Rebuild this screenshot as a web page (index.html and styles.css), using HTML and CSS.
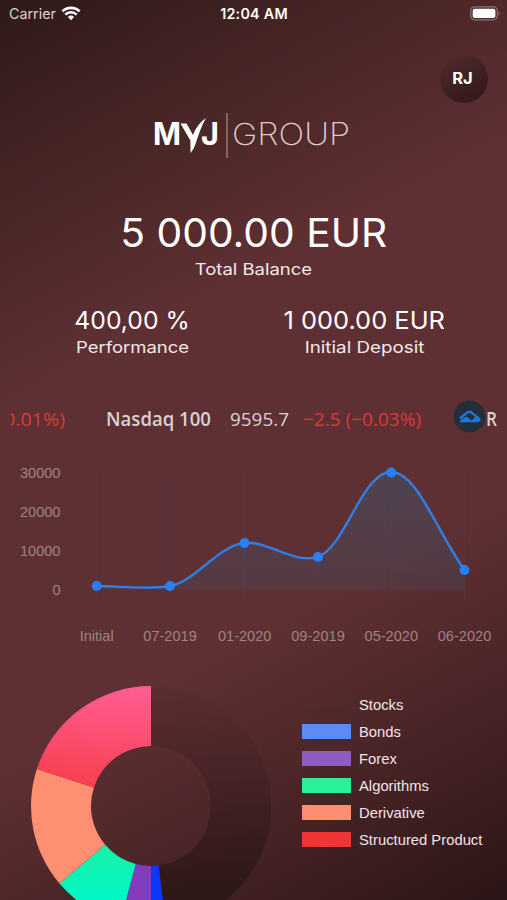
FILE: index.html
```html
<!DOCTYPE html>
<html lang="en">
<head>
    <meta charset="UTF-8">
    <meta name="viewport" content="width=device-width, initial-scale=1.0">
    <title>MYJ Group</title>
    <link rel="stylesheet" href="styles.css">
</head>

<body>
    <div class="status-bar">
        <div class="carrier">
            <span>Carrier</span>
            <svg width="20" height="16" viewBox="0 0 20 16">
                <path d="M1.4 5.4 A12.2 12.2 0 0 1 18.6 5.4" fill="none" stroke="#fff" stroke-width="2.6"/>
                <path d="M4.3 8.6 A8 8 0 0 1 15.7 8.6" fill="none" stroke="#fff" stroke-width="2.4"/>
                <path d="M6.9 10.9 A4.4 4.4 0 0 1 13.1 10.9 L10 14.2 Z" fill="#fff"/>
            </svg>
        </div>
        <div class="time">12:04 AM</div>
        <svg class="battery" width="32" height="16" viewBox="0 0 32 16">
            <rect x="0.8" y="0.8" width="26.5" height="13" rx="4" fill="none" stroke="#8f7072" stroke-width="1.2"/>
            <rect x="2.7" y="2.7" width="22.7" height="9.2" rx="2" fill="#fff"/>
            <path d="M28.6 5 Q31 7.3 28.6 9.7 Z" fill="#8f7072"/>
        </svg>
    </div>

    <div class="top">
        <div class="avatar">RJ</div>
    </div>

    <div class="logo">
        <svg width="200" height="50" viewBox="0 0 200 50">
            <text class="logo-bold" x="-1" y="34" textLength="28" lengthAdjust="spacingAndGlyphs">M</text>
            <path d="M26.5 12.5 L32.5 12.5 L39 24 Q43 13 52 7 Q48.5 13 46 20 Q43 28 41.5 33 Q40 38 36.5 42 L36.4 29.5 Z" fill="#fff"/>
            <text class="logo-bold" x="47" y="34" textLength="18" lengthAdjust="spacingAndGlyphs">J</text>
            <line x1="73" y1="2" x2="73" y2="47" stroke="#a88c8c" stroke-width="1.2"/>
            <text class="logo-thin" x="78" y="34" textLength="118" lengthAdjust="spacingAndGlyphs">GROUP</text>
        </svg>
    </div>

    <div class="balance">
        <div class="amount"><span>5 000.00 EUR</span></div>
        <div class="label"><span class="l1">Total Balance</span></div>
    </div>

    <div class="stats">
        <div class="stat">
            <div class="value"><span class="v1">400,00 %</span></div>
            <div class="label"><span class="l2">Performance</span></div>
        </div>
        <div class="stat stat-right">
            <div class="value"><span class="v2">1 000.00 EUR</span></div>
            <div class="label"><span class="l3">Initial Deposit</span></div>
        </div>
    </div>

    <div class="ticker">
        <svg width="486" height="36" viewBox="0 0 486 36">
            <text class="down" x="-7" y="26" textLength="61" lengthAdjust="spacingAndGlyphs">0.01%)</text>
            <line x1="75" y1="8" x2="75" y2="30" stroke="#553035"/>
            <text class="name" x="95" y="26" textLength="105" lengthAdjust="spacingAndGlyphs">Nasdaq 100</text>
            <text class="price" x="219" y="26" textLength="59" lengthAdjust="spacingAndGlyphs">9595.7</text>
            <text class="down" x="292" y="26" textLength="118" lengthAdjust="spacingAndGlyphs">−2.5 (−0.03%)</text>
            <circle cx="458.5" cy="16.5" r="16" fill="#252d3a"/>
            <path d="M449 18.5 L456 12.6 Q458 11 460.5 12.6 L469 19.5" fill="none" stroke="#1b78d6" stroke-width="2.4"/>
            <path d="M449.5 22.2 Q448 21 450 19.8 L455.5 16.5 L460.5 20.4 L465.5 16 Q470 18 469.5 20.5 Q468.5 22.2 466 22.2 Z" fill="#1b78d6"/>
            <text class="name" x="475" y="26" textLength="11" lengthAdjust="spacingAndGlyphs">R</text>
        </svg>
    </div>

    <svg class="line-chart" width="507" height="210" viewBox="0 450 507 210">
        <defs>
            <linearGradient id="area" x1="0" y1="472" x2="0" y2="590" gradientUnits="userSpaceOnUse">
                <stop offset="0" stop-color="#2a6b90" stop-opacity="0.32"/>
                <stop offset="1" stop-color="#2a6b90" stop-opacity="0.15"/>
            </linearGradient>
        </defs>
        <g stroke="#4a4468" stroke-opacity="0.25" stroke-width="1.5">
            <line x1="97" y1="472" x2="97" y2="602"/>
            <line x1="170" y1="472" x2="170" y2="602"/>
            <line x1="244.5" y1="472" x2="244.5" y2="602"/>
            <line x1="318" y1="472" x2="318" y2="602"/>
            <line x1="391" y1="472" x2="391" y2="602"/>
            <line x1="464.5" y1="472" x2="464.5" y2="602"/>
        </g>
        <path fill="url(#area)" d="M97 586 C121 586 146 590 170 586 C196 581 219 545 244.5 543 C268 540.5 293 564 318 557 C346 546 362 472 391 472 C417 472 436 530 464.5 570 L464.5 589.5 L97 589.5 Z"/>
        <path fill="none" stroke="#2f7fe6" stroke-width="2.4" d="M97 586 C121 586 146 590 170 586 C196 581 219 545 244.5 543 C268 540.5 293 564 318 557 C346 546 362 472 391 472 C417 472 436 530 464.5 570"/>
        <g fill="#2781fb">
            <circle cx="96.7" cy="586" r="4.9"/>
            <circle cx="170" cy="586" r="4.9"/>
            <circle cx="244.5" cy="543" r="4.9"/>
            <circle cx="318" cy="557" r="4.9"/>
            <circle cx="391.2" cy="472.5" r="4.9"/>
            <circle cx="464.5" cy="570" r="4.9"/>
        </g>
        <g class="axis" text-anchor="end">
            <text x="60.5" y="477.5">30000</text>
            <text x="60.5" y="516.5">20000</text>
            <text x="60.5" y="555.5">10000</text>
            <text x="60.5" y="594.5">0</text>
        </g>
        <g class="axis" text-anchor="middle">
            <text x="96.7" y="641">Initial</text>
            <text x="170" y="641">07-2019</text>
            <text x="244.7" y="641">01-2020</text>
            <text x="318" y="641">09-2019</text>
            <text x="391.3" y="641">05-2020</text>
            <text x="464.5" y="641">06-2020</text>
        </g>
    </svg>

    <div class="portfolio">
        <!-- donut, centre 120 120 -->
        <svg class="donut" width="240" height="240" viewBox="0 0 240 240">
            <defs>
                <linearGradient id="stocks" x1="120" y1="0" x2="145" y2="240" gradientUnits="userSpaceOnUse">
                    <stop offset="0" stop-color="#5c2e31"/>
                    <stop offset="0.85" stop-color="#2f1818"/>
                    <stop offset="1" stop-color="#2b1515"/>
                </linearGradient>
                <linearGradient id="product" x1="75" y1="0" x2="65" y2="100" gradientUnits="userSpaceOnUse">
                    <stop offset="0" stop-color="#ff5c92"/>
                    <stop offset="1" stop-color="#f8404f"/>
                </linearGradient>
                <linearGradient id="algo" x1="0" y1="155" x2="0" y2="215" gradientUnits="userSpaceOnUse">
                    <stop offset="0" stop-color="#1bf0a6"/>
                    <stop offset="1" stop-color="#00f6c6"/>
                </linearGradient>
            </defs>
            <path fill="url(#stocks)" d="M120 0 A120 120 0 0 1 135 239.1 L127.5 179.5 A60 60 0 0 0 120 60 Z"/>
            <path fill="#0a38fc" d="M135 239.1 A120 120 0 0 1 120 240 L120 180 A60 60 0 0 0 127.5 179.5 Z"/>
            <path fill="#843cbe" d="M120 240 A120 120 0 0 1 89.3 236 L104.7 178 A60 60 0 0 0 120 180 Z"/>
            <path fill="url(#algo)" d="M89.3 236 A120 120 0 0 1 28.5 197.6 L74.2 158.8 A60 60 0 0 0 104.7 178 Z"/>
            <path fill="#ff8f70" d="M28.5 197.6 A120 120 0 0 1 5.9 82.9 L62.9 101.5 A60 60 0 0 0 74.2 158.8 Z"/>
            <path fill="url(#product)" d="M5.9 82.9 A120 120 0 0 1 120 0 L120 60 A60 60 0 0 0 62.9 101.5 Z"/>
        </svg>
        <div class="legend">
            <div class="item"><i class="swatch stocks"></i>Stocks</div>
            <div class="item"><i class="swatch bonds"></i>Bonds</div>
            <div class="item"><i class="swatch forex"></i>Forex</div>
            <div class="item"><i class="swatch algorithms"></i>Algorithms</div>
            <div class="item"><i class="swatch derivative"></i>Derivative</div>
            <div class="item"><i class="swatch product"></i>Structured Product</div>
        </div>
    </div>
</body>
</html>
```

FILE: styles.css
```css
* {
    box-sizing: border-box;
}

body {
    margin: 0;
    width: 507px;
    height: 900px;
    overflow: hidden;
    color: #fff;
    font-family: Inter, "Liberation Sans", sans-serif;
    background: linear-gradient(152deg, #2f1919 0%, #432323 14%, #5f3033 35%, #5f3033 66%, #432123 86%, #2b1516 100%);
}

svg {
    display: block;
}

.status-bar {
    display: grid;
    grid-template-columns: 1fr auto 1fr;
    align-items: center;
    height: 27px;
    padding: 0 5px 0 9px;
}

.carrier {
    display: flex;
    align-items: center;
    gap: 5px;
    font-size: 14.3px;
    color: #ddd0d0;
}

.time {
    font-size: 14.3px;
    font-weight: 600;
    letter-spacing: 0.25px;
    margin-left: -3px;
}

.battery {
    justify-self: end;
}

.top {
    display: flex;
    justify-content: flex-end;
    padding: 28px 19px 0 0;
}

.avatar {
    width: 48px;
    height: 48px;
    border-radius: 50%;
    background: linear-gradient(150deg, #542b2d 5%, #3f2122 50%, #2f1819 100%);
    font-size: 16.5px;
    font-weight: 700;
    line-height: 47px;
    text-align: center;
    padding-right: 3px;
}

.logo {
    display: flex;
    padding: 8px 0 0 154px;
}

.logo-bold {
    font-size: 31px;
    font-weight: 700;
    fill: #fff;
}

.logo-thin {
    font-size: 30.5px;
    font-weight: 200;
    fill: #dccaca;
}

.balance {
    padding-top: 47px;
    text-align: center;
}

.amount {
    height: 50px;
    line-height: 50px;
    font-size: 39px;
}

.amount span,
.label span,
.value span {
    display: inline-block;
    white-space: nowrap;
}

/* widen the letters a little */
.amount span { transform: scaleX(1.045); }
.label .l1 { transform: scaleX(1.12); }
.label .l2 { transform: scaleX(1.12); }
.label .l3 { transform: scaleX(1.14); }
.value .v1 { transform: scaleX(1.03); }
.value .v2 { transform: scaleX(1.06); }

.label {
    height: 22px;
    line-height: 22px;
    font-size: 16.5px;
    color: #f3e9e9;
}

.stats {
    display: flex;
    padding-top: 25px;
    text-align: center;
}

.stat {
    width: 265px;
}

.stat-right {
    width: 199px;
}

.value {
    height: 31px;
    line-height: 31px;
    font-size: 24px;
}

.ticker {
    height: 36px;
    margin: 42px 10px 0 11px;
    overflow: hidden;
    font-family: "Open Sans", sans-serif;
    font-size: 19px;
}

.name {
    font-weight: 600;
    fill: #dad0d2;
}

.price {
    fill: #dad0d2;
}

.down {
    fill: #dd3a3a;
}

.line-chart {
    margin-top: 14px;
}

.axis {
    font-family: "Liberation Sans", sans-serif;
    font-size: 14.6px;
    fill: #9f8384;
}

.portfolio {
    display: flex;
    padding: 26px 0 0 31px;
}

.donut {
    flex: none;
}

.legend {
    margin-left: 31px;
    padding-top: 5px;
    font-family: "Liberation Sans", sans-serif;
    font-size: 14.8px;
    color: #f0e6e6;
}

.item {
    display: flex;
    align-items: center;
    gap: 8px;
    height: 27px;
    white-space: nowrap;
}

.swatch {
    width: 49px;
    height: 15px;
}

.stocks { background: linear-gradient(170deg, #572b2e, #4e282a); }
.bonds { background: #5c8bf6; }
.forex { background: #915cc0; }
.algorithms { background: #29f195; }
.derivative { background: #ff8e70; }
.product { background: #f23433; }
```
